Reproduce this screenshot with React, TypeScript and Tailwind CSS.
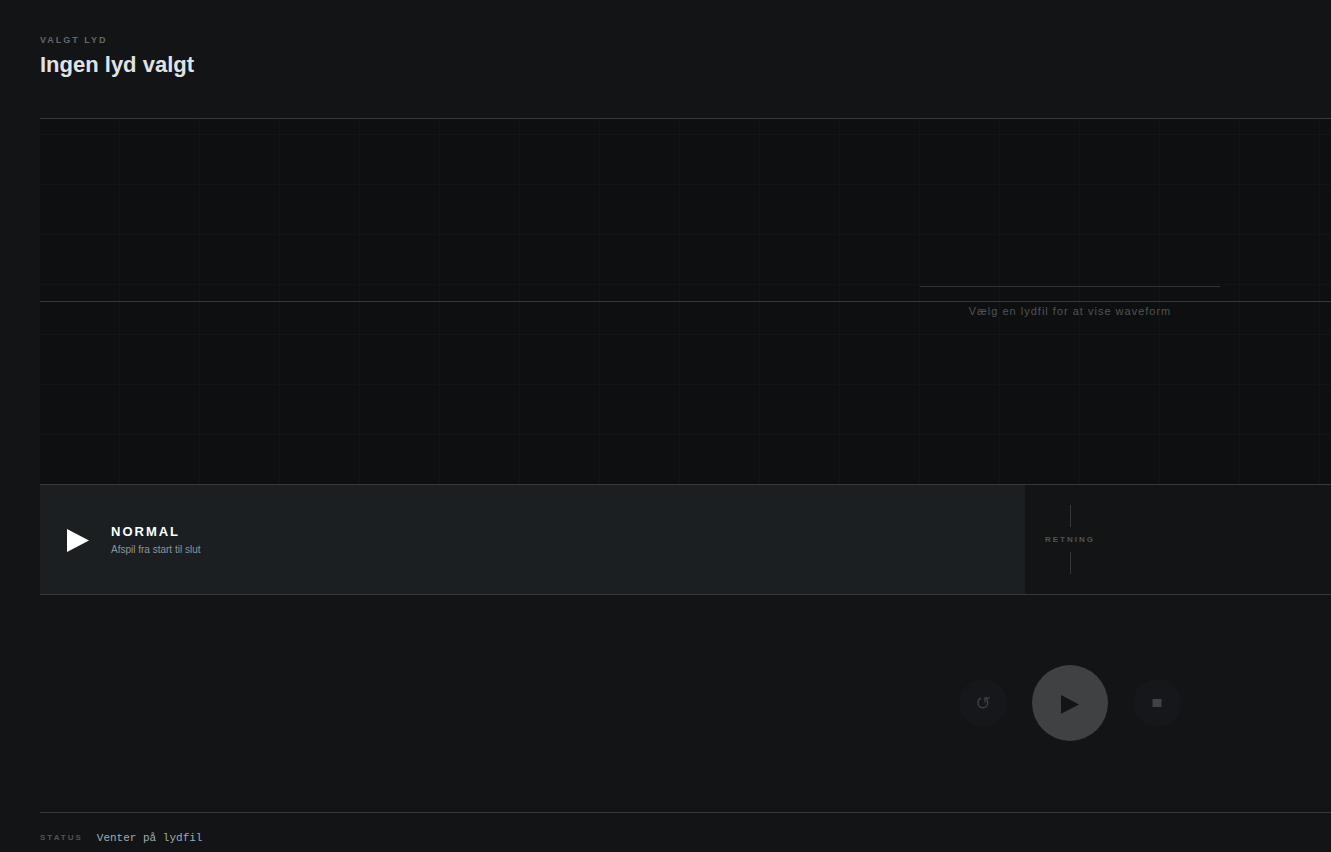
import React from 'react';
import { clsx } from 'clsx';

// ─── Icons ────────────────────────────────────────────────────────────────────

function PlayIcon({ className }: { className?: string }) {
  return (
    <svg viewBox="0 0 22 24" className={className} fill="currentColor" aria-hidden="true">
      <path d="M0 1 22 12.5 0 24Z" />
    </svg>
  );
}

function RestartIcon() {
  return (
    <svg viewBox="0 0 14 12" className="w-3.5 h-3" fill="none" stroke="currentColor" aria-hidden="true">
      <path d="M5 1.2C3.2 1.9 2 3.4 2 5.6c0 3 2 5.2 4.8 5.2s4.9-2.2 4.9-5.2c0-1.8-.7-3.3-1.9-4.5" strokeWidth="1.4" />
      <path d="M9 5.4V.8h4.8" strokeWidth="1.3" />
    </svg>
  );
}

function StopIcon() {
  return (
    <svg viewBox="0 0 10 8" className="w-2.5 h-2" fill="currentColor" aria-hidden="true">
      <path d="M.5 0h9v8h-9z" />
    </svg>
  );
}

// ─── Sections ─────────────────────────────────────────────────────────────────

function Header() {
  return (
    <header className="h-[118px] pt-[34px]">
      <p className="text-[9px] leading-3 font-bold tracking-[2px] text-[#64686a]">VALGT LYD</p>
      <h1 className="mt-[5px] text-[22px] leading-7 font-bold text-[#e0e3e5]">Ingen lyd valgt</h1>
    </header>
  );
}

function Waveform() {
  return (
    <section
      aria-label="Waveform"
      className="relative flex-1 min-h-64 flex flex-col items-center justify-center gap-[18px] border-y border-[#363839] bg-[#0d0f10] bg-[repeating-linear-gradient(90deg,transparent_0_79px,rgba(255,255,255,0.018)_79px_80px),repeating-linear-gradient(0deg,transparent_0_49px,rgba(255,255,255,0.018)_49px_50px)]"
    >
      <div className="absolute inset-x-0 top-1/2 -mt-px h-px bg-[#363839]" />
      <div className="w-[300px] h-px bg-[#2e3336]" />
      <p className="text-[11px] leading-3 tracking-[1px] text-[#505456]">Vælg en lydfil for at vise waveform</p>
    </section>
  );
}

function DirectionRow() {
  return (
    <section className="h-[110px] grid grid-cols-[1fr_90px_1fr] border-b border-[#363839]">
      <button
        type="button"
        aria-pressed="true"
        className="flex items-center gap-[22px] pl-[27px] bg-[#1b1f21] text-left"
      >
        <PlayIcon className="w-[22px] h-6 text-white" />
        <span className="flex flex-col gap-1">
          <span className="text-[13px] leading-4 font-bold tracking-[2px] text-white">NORMAL</span>
          <span className="text-[10px] leading-3 text-[#8d9598]">Afspil fra start til slut</span>
        </span>
      </button>
      <div className="flex flex-col items-center justify-center gap-2">
        <div className="w-px h-[22px] bg-[#363839]" />
        <span className="text-[8px] leading-[9px] font-bold tracking-[2px] text-[#505456]">RETNING</span>
        <div className="w-px h-[22px] bg-[#363839]" />
      </div>
    </section>
  );
}

interface RoundButtonProps {
  label: string;
  primary?: boolean;
  children: React.ReactNode;
}

function RoundButton({ label, primary, children }: RoundButtonProps) {
  return (
    <button
      type="button"
      disabled
      aria-label={label}
      className={clsx(
        'flex items-center justify-center rounded-full',
        primary ? 'size-[76px] pt-0.5 bg-[#404142] text-[#121416]' : 'size-12 bg-[#15171b] text-[#404244]'
      )}
    >
      {children}
    </button>
  );
}

function Transport() {
  return (
    <section className="h-[217px] pb-0.5 flex items-center justify-center gap-[25px]">
      <RoundButton label="Forfra">
        <RestartIcon />
      </RoundButton>
      <RoundButton label="Afspil" primary>
        <PlayIcon className="w-[18px] h-5" />
      </RoundButton>
      <RoundButton label="Stop">
        <StopIcon />
      </RoundButton>
    </section>
  );
}

function StatusBar() {
  return (
    <footer className="h-10 flex items-start gap-3.5 pt-[18px] border-t border-[#363839]">
      <span className="text-[8px] leading-[14px] font-bold tracking-[2px] text-[#505456]">STATUS</span>
      <span className="font-['Liberation_Mono',monospace] text-[11px] leading-[14px] text-[#a3abae]">
        Venter på lydfil
      </span>
    </footer>
  );
}

// ─── Page ─────────────────────────────────────────────────────────────────────

export default function App() {
  return (
    <div className="overflow-x-clip bg-[#121416] font-['Liberation_Sans',Arial,sans-serif]">
      <main className="min-w-[2140px] min-h-screen flex flex-col px-10">
        <Header />
        <Waveform />
        <DirectionRow />
        <Transport />
        <StatusBar />
      </main>
    </div>
  );
}
